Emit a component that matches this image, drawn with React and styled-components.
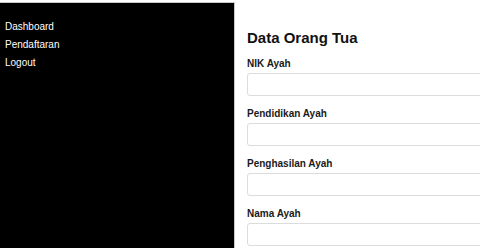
import React from 'react'
import styled, { createGlobalStyle } from 'styled-components';

const GlobalStyle = createGlobalStyle`
  html, body {
    margin: 0;
    padding: 0;
    background: #fff;
    overflow: hidden;
  }
  body {
    font-family: "Liberation Sans", Arial, sans-serif;
  }
`;

const Page = styled.div`
  display: flex;
  width: 480px;
  height: 248px;
  padding-top: 2px;
  box-sizing: border-box;
  overflow: hidden;
`;

const SideBar = styled.nav`
  flex: 0 0 235px;
  box-sizing: border-box;
  background-color: #000;
  border-top: 1px solid #c8c8c8;
  border-right: 1px solid #c8c8c8;
  padding: 15px 0 0 5px;
`;

const SideBarList = styled.ul`
  list-style: none;
  margin: 0;
  padding: 0;
`;

const SideBarItem = styled.li`
  color: #fff;
  font-size: 10px;
  line-height: 18px;
`;

const Main = styled.main`
  flex: 1;
  min-width: 0;
  padding: 27px 0 0 12px;
`;

const Title = styled.h1`
  margin: 0 0 12px;
  font-size: 15px;
  line-height: 17px;
  font-weight: bold;
  color: #111;
`;

const Field = styled.div`
  display: flex;
  flex-direction: column;
  gap: 3px;
  margin-bottom: 12px;
`;

const Label = styled.label`
  font-size: 10px;
  font-weight: bold;
  color: #1a1a1a;
  line-height: 12px;
`;

const Input = styled.input`
  width: 300px;
  height: 23px;
  box-sizing: border-box;
  border: 1px solid #dcdcdc;
  border-radius: 3px;
  background: #fff;
  outline: none;
`;

const menu = ['Dashboard', 'Pendaftaran', 'Logout'];
const fields = ['NIK Ayah', 'Pendidikan Ayah', 'Penghasilan Ayah', 'Nama Ayah'];

export default function App() {
  return (
    <>
      <GlobalStyle />
      <Page>
        <SideBar>
          <SideBarList>
            {menu.map((m) => <SideBarItem key={m}>{m}</SideBarItem>)}
          </SideBarList>
        </SideBar>
        <Main>
          <Title>Data Orang Tua</Title>
          {fields.map((f) => (
            <Field key={f}>
              <Label>{f}</Label>
              <Input type="text" />
            </Field>
          ))}
        </Main>
      </Page>
    </>
  )
}
